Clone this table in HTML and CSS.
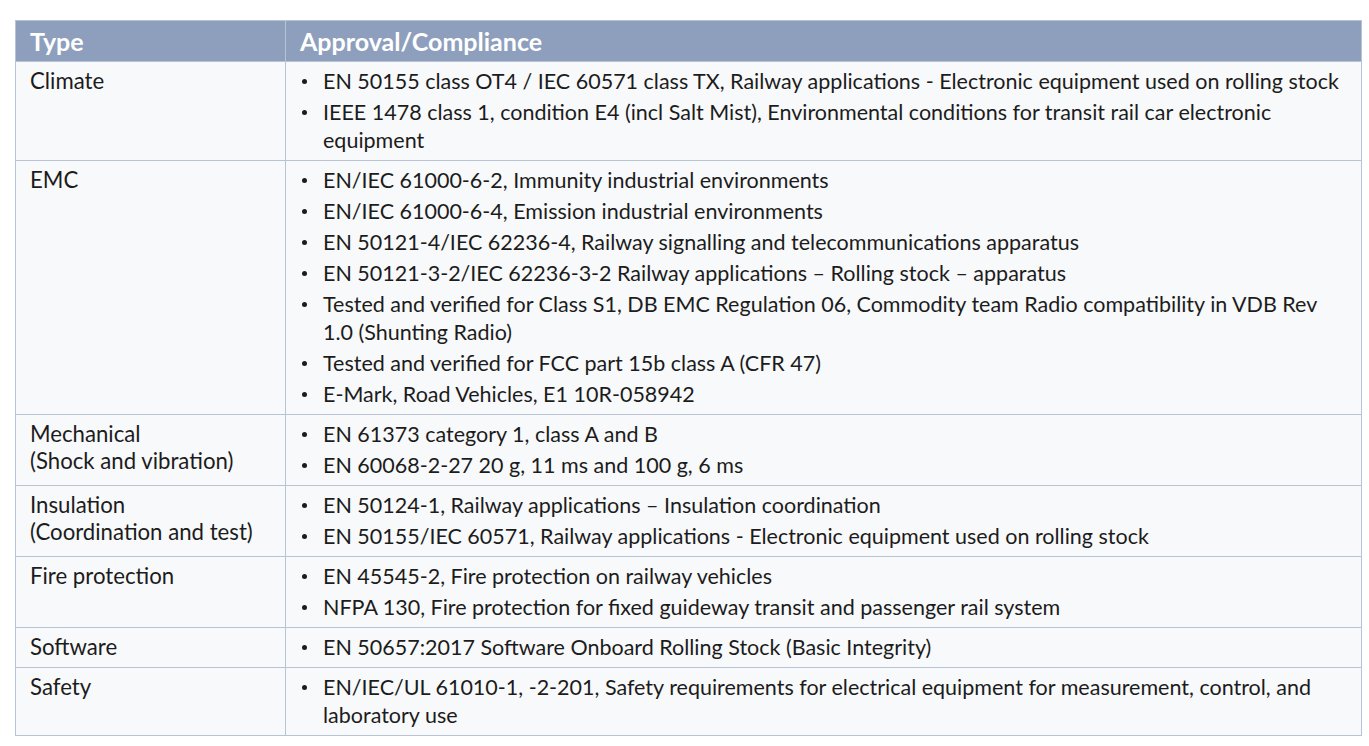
FILE: index.html
```html
<!DOCTYPE html>
<html>
<head>
<meta charset="utf-8">
<link rel="stylesheet" href="styles.css">
</head>
<body>
<table class="spec">
  <thead>
    <tr><th class="type">Type</th><th>Approval/Compliance</th></tr>
  </thead>
  <tbody>
    <tr>
      <td class="type">Climate</td>
      <td><ul>
        <li>EN 50155 class OT4 / IEC 60571 class TX, Railway applications - Electronic equipment used on rolling stock</li>
        <li>IEEE 1478 class 1, condition E4 (incl Salt Mist), Environmental conditions for transit rail car electronic equipment</li>
      </ul></td>
    </tr>
    <tr>
      <td class="type">EMC</td>
      <td><ul>
        <li>EN/IEC 61000-6-2, Immunity industrial environments</li>
        <li>EN/IEC 61000-6-4, Emission industrial environments</li>
        <li>EN 50121-4/IEC 62236-4, Railway signalling and telecommunications apparatus</li>
        <li>EN 50121-3-2/IEC 62236-3-2 Railway applications – Rolling stock – apparatus</li>
        <li>Tested and verified for Class S1, DB EMC Regulation 06, Commodity team Radio compatibility in VDB Rev 1.0 (Shunting Radio)</li>
        <li>Tested and verified for FCC part 15b class A (CFR 47)</li>
        <li>E-Mark, Road Vehicles, E1 10R-058942</li>
      </ul></td>
    </tr>
    <tr>
      <td class="type">Mechanical<br>(Shock and vibration)</td>
      <td><ul>
        <li>EN 61373 category 1, class A and B</li>
        <li>EN 60068-2-27 20 g, 11 ms and 100 g, 6 ms</li>
      </ul></td>
    </tr>
    <tr>
      <td class="type">Insulation<br>(Coordination and test)</td>
      <td><ul>
        <li>EN 50124-1, Railway applications – Insulation coordination</li>
        <li>EN 50155/IEC 60571, Railway applications - Electronic equipment used on rolling stock</li>
      </ul></td>
    </tr>
    <tr>
      <td class="type">Fire protection</td>
      <td><ul>
        <li>EN 45545-2, Fire protection on railway vehicles</li>
        <li>NFPA 130, Fire protection for fixed guideway transit and passenger rail system</li>
      </ul></td>
    </tr>
    <tr>
      <td class="type">Software</td>
      <td><ul>
        <li>EN 50657:2017 Software Onboard Rolling Stock (Basic Integrity)</li>
      </ul></td>
    </tr>
    <tr>
      <td class="type">Safety</td>
      <td><ul>
        <li>EN/IEC/UL 61010-1, -2-201, Safety requirements for electrical equipment for measurement, control, and laboratory use</li>
      </ul></td>
    </tr>
  </tbody>
</table>
</body>
</html>
```

FILE: styles.css
```css
html, body {
  margin: 0;
  padding: 0;
  background: #ffffff;
}
body {
  padding: 20px 8px 0 15px;
  font-family: "Lato", "Liberation Sans", sans-serif;
  color: #1c1c1c;
}
.spec {
  width: 1347px;
  border-collapse: collapse;
  background: #f8f9fb;
  border: 1px solid #b9c3d6;
}
.spec th {
  background: #8e9fbe;
  color: #ffffff;
  font-weight: 700;
  font-size: 25px;
  text-align: left;
  height: 40px;
  padding: 0 14px;
  border-left: 1px solid #b9c3d6;
  box-sizing: border-box;
  line-height: 40px;
}
.spec td {
  vertical-align: top;
  font-size: 21.5px;
  line-height: 28px;
  padding: 5px 14px 6px 14px;
  border: 1px solid #b9c3d6;
}
.spec .type {
  width: 241px;
}
.spec td.type {
  font-size: 22.2px;
  line-height: 27px;
}
.spec ul {
  margin: 0;
  padding: 0;
  list-style: none;
}
.spec li {
  position: relative;
  padding-left: 23px;
  margin-top: 3px;
}
.spec li:first-child {
  margin-top: 0;
}
.spec li::before {
  content: "";
  position: absolute;
  left: 2px;
  top: 12px;
  width: 5px;
  height: 5px;
  border-radius: 50%;
  background: #1c1c1c;
}
```
